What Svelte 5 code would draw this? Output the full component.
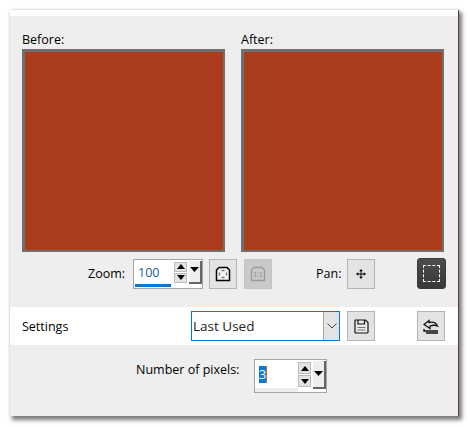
<script>
  const stepArrows = ["M0 5 L4 0 L8 5 Z", "M0 0 L8 0 L4 5 Z"];
</script>

{#snippet spinner(value, cls)}
  <div class="spin {cls}">
    <div class="field">
      <span class="val">{value}</span>
      <span class="under"></span>
    </div>
    <div class="steps">
      {#each stepArrows as d}
        <span class="step"><svg width="8" height="5" viewBox="0 0 8 5"><path d={d} fill="#000"/></svg></span>
      {/each}
    </div>
    <div class="drop"><svg width="9" height="5" viewBox="0 0 10 5.5"><path d="M0 0 H10 L5 5.5 Z" fill="#000"/></svg></div>
  </div>
{/snippet}

<div class="page">
<div class="dialog">
  <div class="panel">
    <div class="previews">
      <div class="pv"><div class="lbl">Before:</div><div class="img"></div></div>
      <div class="pv"><div class="lbl">After:</div><div class="img"></div></div>
    </div>

    <div class="toolbar">
      <span class="t zoomlbl">Zoom:</span>
      {@render spinner("100", "zoom")}
      <button class="btn fit" aria-label="Fit">
        <svg width="16" height="16" viewBox="0 0 16 16" fill="#f4f4f4" stroke="#000">
          <path d="M4 1.5 H12 L14.5 4 V14.5 H1.5 V4 Z" stroke-width="1.5"/>
          <path d="M6.5 4.5h3M6.5 11.5h3M4.5 6.5v3M11.5 6.5v3" stroke-width="1.3" stroke="#777" fill="none"/>
        </svg>
      </button>
      <button class="btn dim" aria-label="Actual size">
        <svg width="16" height="16" viewBox="0 0 16 16" fill="none" stroke="#9a9a9a">
          <path d="M4 1.5 H12 L14.5 4 V14.5 H1.5 V4 Z" stroke-width="1.3"/>
          <text x="8" y="11" text-anchor="middle" font-size="6.5" fill="#8e8e8e" stroke="none">1:1</text>
        </svg>
      </button>
      <span class="t panlbl">Pan:</span>
      <button class="btn pan" aria-label="Pan">
        <svg width="10" height="10" viewBox="0 0 11 11" fill="#000">
          <path d="M5.5 0 L7.5 2.5 H6 V5 H8.5 V3.5 L11 5.5 L8.5 7.5 V6 H6 V8.5 H7.5 L5.5 11 L3.5 8.5 H5 V6 H2.5 V7.5 L0 5.5 L2.5 3.5 V5 H5 V2.5 H3.5 Z"/>
        </svg>
      </button>
      <button class="btn dark" aria-label="Selection"><span class="marquee"></span></button>
    </div>

    <div class="settings">
      <span class="t setlbl">Settings</span>
      <div class="combo">
        <span class="comboval">Last Used</span>
        <span class="chev">
          <svg width="10" height="6" viewBox="0 0 10 6" fill="none" stroke="#444"><path d="M0.5 0.5 L5 5 L9.5 0.5"/></svg>
        </span>
      </div>
      <button class="btn save" aria-label="Save">
        <svg width="15" height="15" viewBox="0 0 15 15" fill="none" stroke="#111" stroke-width="1.2">
          <path d="M1.5 1 H11.5 L14 3.5 V13 Q14 14 13 14 H2 Q1 14 1 13 V1.5 Z" fill="#ececec"/>
          <path d="M4 1 V5 H10.5 V1"/>
          <path d="M3.5 8.5 H11.5 M3.5 11 H11.5" stroke="#777"/>
        </svg>
      </button>
      <button class="btn restore" aria-label="Restore">
        <svg width="16" height="15" viewBox="0 0 16 15" fill="none" stroke="#111" stroke-width="1.3">
          <path d="M1 5.5 L6 1.5 V3.5 Q12 2 14.5 7 Q11 5.5 7 7 V9.5 Z"/>
          <path d="M1 10 V12 H15 M3 14 H15" stroke-width="1.4"/>
        </svg>
      </button>
    </div>

    <div class="pixels">
      <span class="t pxlbl">Number of pixels:</span>
      {@render spinner("3", "px")}
    </div>
  </div>
</div>
</div>

<style>
  :global(body) { margin: 0; background: #fff; }
  .page {
    width: 470px;
    height: 427px;
    padding: 10px 0 0 10px;
    box-sizing: border-box;
    overflow: hidden;
    background: #fff;
  }
  .dialog {
    width: 448px;
    height: 406px;
    padding-top: 6px;
    box-sizing: border-box;
    background: #fff;
    box-shadow: 1px 0 0 #5f4030, 3px 3px 4px 1px #7a7a7a, 0 0 3px #ddd;
    font-family: "Open Sans", "Noto Sans", sans-serif;
    font-size: 12.5px;
    color: #000;
  }
  .panel {
    height: 400px;
    background: #eeeeee;
    display: flex;
    flex-direction: column;
  }
  .previews {
    display: flex;
    gap: 16px;
    padding: 15px 0 0 12px;
  }
  .lbl { height: 18px; line-height: 17px; }
  .img {
    width: 203px;
    height: 203px;
    box-sizing: border-box;
    border: solid #707070;
    border-width: 3px 2px 2px 3px;
    background: #ab3d1c;
  }
  .toolbar {
    display: flex;
    align-items: center;
    height: 31px;
    margin-top: 6px;
  }
  .t { white-space: nowrap; }
  .zoomlbl { margin-left: 78px; width: 45px; }
  .btn {
    width: 28px;
    height: 30px;
    padding: 0;
    box-sizing: border-box;
    border: 1px solid #b4b4b4;
    background: #e3e3e3;
    display: flex;
    align-items: center;
    justify-content: center;
    flex: none;
  }
  .fit { margin-left: 6px; }
  .dim { margin-left: 7px; background: #c9c9c9; border-color: #c4c4c4; }
  .panlbl { margin-left: 44px; width: 31px; }
  .dark {
    margin-left: 42px;
    width: 29px;
    height: 31px;
    background: linear-gradient(#4c4c4c, #383838);
    border: 1px solid #3a3a3a;
    border-radius: 3px;
  }
  .marquee { width: 15px; height: 15px; border: 1px dashed #fff; }

  .spin {
    position: relative;
    display: flex;
    height: 30px;
    box-sizing: border-box;
    border: 1px solid #a5a5a5;
    background: #fff;
    flex: none;
  }
  .zoom { width: 70px; }
  .px { width: 73px; height: 34px; }
  .field { position: relative; flex: 1; min-width: 0; }
  .val { position: absolute; left: 4px; top: 4px; line-height: 18px; color: #1a5a9c; }
  .under { position: absolute; left: 1px; bottom: 1px; width: 36px; height: 3px; background: #0078d7; }
  .px .val {
    left: 4px;
    top: 6px;
    width: 7px;
    height: 17px;
    line-height: 17px;
    background: #0a78d7;
    border-right: 1px solid #d2691e;
    color: #fff;
    overflow: hidden;
    text-align: center;
  }
  .px .under { left: 0; right: 0; bottom: 0; width: auto; height: 4px; background: #eeeeee; }
  .steps { display: flex; flex-direction: column; gap: 1px; padding-top: 2px; width: 13px; margin-right: 2px; }
  .step {
    height: 10px;
    box-sizing: border-box;
    background: #e3e3e3;
    border: 1px solid #bbb;
    display: flex;
    align-items: center;
    justify-content: center;
  }
  .px .step { height: 12px; }
  .drop {
    width: 13px;
    height: 23px;
    margin-top: 1px;
    background: #eee;
    border-right: 2px solid #666;
    border-bottom: 2px solid #666;
    box-sizing: border-box;
    display: flex;
    align-items: flex-start;
    justify-content: center;
    padding-top: 6px;
  }
  .px .drop { height: 28px; padding-top: 10px; }

  .settings {
    display: flex;
    align-items: center;
    height: 38px;
    margin-top: 18px;
    background: #fff;
  }
  .setlbl { margin-left: 12px; width: 169px; }
  .combo {
    width: 149px;
    height: 30px;
    box-sizing: border-box;
    border: 1px solid #0078d7;
    display: flex;
    align-items: stretch;
    background: #fff;
  }
  .comboval { flex: 1; font-size: 13.5px; line-height: 28px; padding-left: 1px; color: #222; }
  .chev {
    width: 15px;
    background: #e3e3e3;
    border-left: 1px solid #aaa;
    display: flex;
    align-items: center;
    justify-content: center;
  }
  .save { margin-left: 7px; }
  .restore { margin-left: 42px; }

  .pixels {
    display: flex;
    height: 34px;
    margin-top: 14px;
  }
  .pxlbl { margin-left: 126px; width: 118px; line-height: 22px; }
</style>
